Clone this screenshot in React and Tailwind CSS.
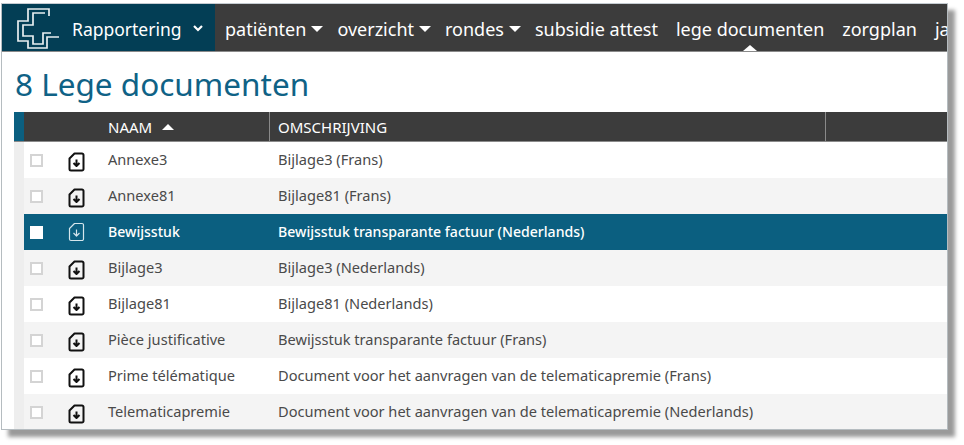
import React from "react";

const navItems = [
  { label: "patiënten", caret: true },
  { label: "overzicht", caret: true },
  { label: "rondes", caret: true },
  { label: "subsidie attest" },
  { label: "lege documenten", active: true },
  { label: "zorgplan" },
  { label: "ja" },
];

const rows = [
  ["Annexe3", "Bijlage3 (Frans)"],
  ["Annexe81", "Bijlage81 (Frans)"],
  ["Bewijsstuk", "Bewijsstuk transparante factuur (Nederlands)"],
  ["Bijlage3", "Bijlage3 (Nederlands)"],
  ["Bijlage81", "Bijlage81 (Nederlands)"],
  ["Pièce justificative", "Bewijsstuk transparante factuur (Frans)"],
  ["Prime télématique", "Document voor het aanvragen van de telematicapremie (Frans)"],
  ["Telematicapremie", "Document voor het aanvragen van de telematicapremie (Nederlands)"],
];

const Logo = () => (
  <svg width="44" height="42" viewBox="0 0 44 42" fill="none" stroke="#e8eef0" strokeWidth="1.7">
    <path d="M32 9V2H11V14H1V34H11V41H30V30H42" />
    <path d="M28 6H16V18H6V29H16V37H26V26H34" />
  </svg>
);

const DocIcon = ({ active }) => (
  <svg
    className={active ? "" : "translate-y-[2px]"}
    width="17"
    height="20"
    viewBox="0 0 17 20"
    fill="none"
    stroke={active ? "#d5e6ec" : "#111"}
    strokeWidth={active ? 1.2 : 2}
    strokeLinejoin="round"
  >
    <path d="M6.5 1.5H14a1.5 1.5 0 0 1 1.5 1.5V17a1.5 1.5 0 0 1-1.5 1.5H3A1.5 1.5 0 0 1 1.5 17V6.5Z" />
    <path d="M8.5 7.5V14M5.5 11L8.5 14L11.5 11" />
  </svg>
);

const Caret = () => (
  <span className="ml-[5px] -mr-[4px] inline-block w-0 h-0 border-x-[6px] border-x-transparent border-t-[6px] border-t-white" />
);

const App = () => {
  return (
    <div className="w-[964px] h-[445px] bg-white overflow-hidden pt-[3px] pl-px font-['Noto_Sans',sans-serif]">
      <div className="w-[947px] h-[427px] bg-white border border-[#b5bcc0] border-t-[#c5ccd2] shadow-[7px_7px_4px_#9a9a9a] overflow-hidden">
        <div className="flex h-[48px] bg-[#3c3c3c] border-b border-[#8a8a8a]">
          <div className="w-[213px] shrink-0 bg-[#033e55] flex items-center pl-[15px] text-white">
            <Logo />
            <span className="ml-[11px] pt-[3px] text-[17.5px]">Rapportering</span>
            <svg className="ml-[11px] mt-[2px]" width="10" height="7" viewBox="0 0 10 7" fill="none" stroke="#fff" strokeWidth="2.2">
              <path d="M1 1L5 5L9 1" />
            </svg>
          </div>
          <div className="flex items-center flex-1 text-[18px] text-white whitespace-nowrap pl-[10px] gap-[18px] overflow-hidden">
            {navItems.map((item) => (
              <div key={item.label} className="relative h-full flex items-center pt-[3px]">
                {item.label}
                {item.caret && <Caret />}
                {item.active && (
                  <span className="absolute bottom-0 left-1/2 -translate-x-1/2 w-0 h-0 border-x-[7px] border-x-transparent border-b-[6px] border-b-white" />
                )}
              </div>
            ))}
          </div>
        </div>

        <h1 className="h-[60px] pl-[13px] pt-[12px] text-[31.5px] leading-[40px] text-[#0f6286]">
          8 Lege documenten
        </h1>

        <div className="ml-[12px]">
          <div className="flex h-[30px] bg-[#3c3c3c] border-b border-[#8a8a8a] text-white text-[15px] leading-[30px]">
            <div className="w-[10px] bg-[#0b5f80]" />
            <div className="w-[246px] pl-[84px] border-r border-[#8a8a8a] flex items-center">
              NAAM
              <span className="ml-[10px] w-0 h-0 border-x-[6px] border-x-transparent border-b-[6px] border-b-white" />
            </div>
            <div className="w-[556px] pl-[8px] border-r border-[#8a8a8a]">OMSCHRIJVING</div>
          </div>

          <div className="flex">
            <div className="w-[10px] bg-[#eeeeee]" />
            <div className="flex-1">
              {rows.map((row, i) => {
                const active = i === 2;
                return (
                  <div
                    key={row[0]}
                    className={
                      active
                        ? "flex items-center h-[36px] bg-[#0b5f80] text-white font-medium text-[14.1px]"
                        : i % 2 === 1
                        ? "flex items-center h-[36px] bg-[#f4f4f4] text-[#4a4a4a] text-[14.6px]"
                        : "flex items-center h-[36px] bg-white text-[#4a4a4a] text-[14.6px]"
                    }
                  >
                    <div className="w-[44px] pl-[6px] shrink-0">
                      <div
                        className={
                          active
                            ? "w-[13px] h-[13px] bg-white"
                            : "w-[13px] h-[13px] bg-white border-2 border-[#d4d4d4]"
                        }
                      />
                    </div>
                    <div className="w-[40px] shrink-0">
                      <DocIcon active={active} />
                    </div>
                    <div className="w-[170px] shrink-0 whitespace-nowrap">{row[0]}</div>
                    <div className="whitespace-nowrap">{row[1]}</div>
                  </div>
                );
              })}
            </div>
          </div>
        </div>
      </div>
    </div>
  );
};

export default App;
